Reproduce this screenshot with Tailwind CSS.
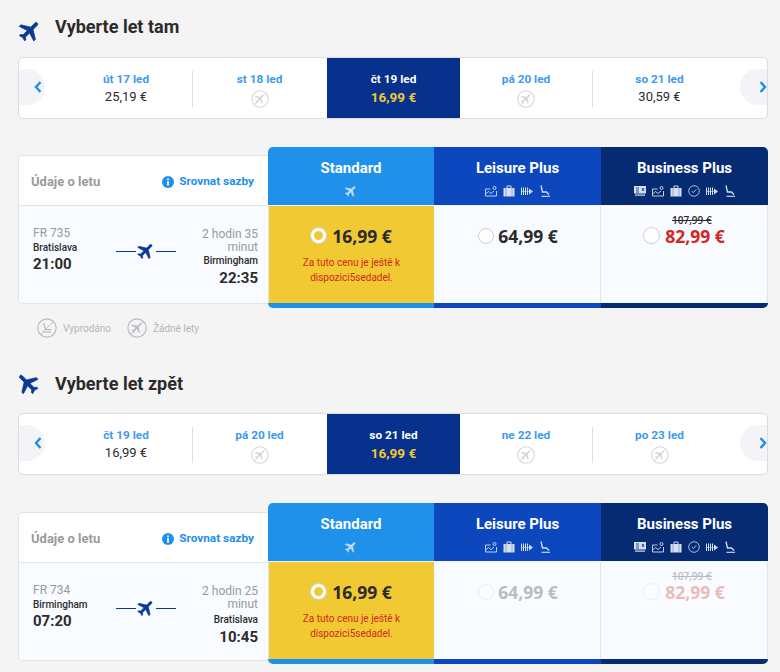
<!DOCTYPE html>
<html lang="cs">
<head>
<meta charset="UTF-8">
<title>Vyberte let</title>
<script src="https://cdn.jsdelivr.net/npm/@tailwindcss/browser@4"></script>
</head>
<body class="bg-[#f4f4f4] font-['Roboto',sans-serif] text-[#2b2b2b] h-[672px] overflow-hidden">
<svg class="hidden">
  <symbol id="plane" viewBox="0 0 24 24"><path fill="currentColor" stroke="currentColor" stroke-width=".7" d="M21 16v-2l-8-5V3.500c0-.83-.67-1.500-1.500-1.500S10 2.670 10 3.500V9l-8 5v2l8-2.500V19l-2 1.500V22l3.500-1 3.500 1v-1.500L13 19v-5.500l8 2.500z"/></symbol>
  <symbol id="noflight" viewBox="0 0 24 24">
    <circle cx="12" cy="12" r="11" fill="none" stroke="currentColor" stroke-width="1.400"/>
    <path fill="currentColor" transform="rotate(45 12 12) translate(3.500 3.500) scale(.7)" d="M21 16v-2l-8-5V3.500c0-.83-.67-1.500-1.500-1.500S10 2.670 10 3.500V9l-8 5v2l8-2.500V19l-2 1.500V22l3.500-1 3.500 1v-1.500L13 19v-5.500l8 2.500z"/>
    <path d="M19.500 4.500 4.500 19.500" stroke="currentColor" stroke-width="1.200"/>
  </symbol>
  <symbol id="soldout" viewBox="0 0 24 24">
    <circle cx="12" cy="12" r="11" fill="none" stroke="currentColor" stroke-width="1.400"/>
    <path d="M8 6l2 8h7M8 17h9" fill="none" stroke="currentColor" stroke-width="1.500"/>
    <path d="M19.500 4.500 4.500 19.500" stroke="currentColor" stroke-width="1.200"/>
  </symbol>
  <symbol id="ticket" viewBox="0 0 12 12"><path fill="currentColor" d="M0 1h12v7.500H0z"/><path d="M2 3h3M2 5h3M2 7h3M8 3l2 3M10 3L8 6" stroke="#0a2a70" stroke-width=".8"/><path fill="currentColor" d="M1 9.500h10v1.200H1z"/></symbol>
  <symbol id="map" viewBox="0 0 12 12"><path d="M.5 4h5M.5 4v7h11V6M.5 9l3-2.500 2.500 2 3-2.500" fill="none" stroke="currentColor" stroke-width=".9"/><circle cx="9.500" cy="3" r="1.500" fill="none" stroke="currentColor" stroke-width=".9"/></symbol>
  <symbol id="bag" viewBox="0 0 12 12"><path fill="currentColor" d="M.5 3h11v8.500H.5z"/><path d="M4 3V1h4v2" fill="none" stroke="currentColor"/><path d="M3 3v8.500M9 3v8.500" stroke="#000" stroke-opacity=".35" stroke-width=".7"/></symbol>
  <symbol id="clock" viewBox="0 0 12 12"><circle cx="6" cy="6" r="5.300" fill="none" stroke="currentColor" stroke-width=".8"/><path d="M3.800 6.200 5.400 7.600 8.200 4.400" fill="none" stroke="currentColor" stroke-width=".8"/></symbol>
  <symbol id="rows" viewBox="0 0 12 12"><path d="M.5 2.500v7.500M2.500 2.500v7.500M4.500 2.500v7.500M6.500 2.500v7.500" stroke="currentColor" stroke-width="1"/><path d="M0 6.500h8" stroke="currentColor" stroke-width=".6"/><path fill="currentColor" d="M8 3.500 12 6.500 8 9.500z"/></symbol>
  <symbol id="seat" viewBox="0 0 12 12"><path d="M2 .5l1.500 6.500h4l2.500 2.500" fill="none" stroke="currentColor" stroke-width="1.300"/><path d="M2.500 11.300h8.500" stroke="currentColor" stroke-width="1.100"/></symbol>
  <symbol id="info" viewBox="0 0 12 12"><circle cx="6" cy="6" r="6" fill="currentColor"/><path d="M5.100 2.400h1.800v1.500H5.100zM5.100 5h1.800v4.600H5.100z" fill="#fff"/></symbol>
</svg>

<main class="w-[768px] pl-[18px]">
  <!-- tam -->
  <section class="h-[57px] flex items-center pt-1">
    <svg class="w-[26px] h-[26px] -ml-[1px] text-[#0b3a96] rotate-45 shrink-0"><use href="#plane"/></svg>
    <h2 class="ml-[12px] text-[18px] font-bold leading-none -mt-2">Vyberte let tam</h2>
  </section>
  <div class="relative h-[62px] bg-white border border-[#dcdcdc] rounded-[5px] overflow-hidden flex pl-[41px] pr-[41px]">
    <button class="absolute left-0 top-[11px] w-[26px] h-9 bg-[#f3f4f8] rounded-r-[18px] flex items-center justify-end pr-[3px]">
      <svg class="w-2 h-3 text-[#2091eb]" viewBox="0 0 8 12"><path d="M6.500 1 2 6l4.500 5" fill="none" stroke="currentColor" stroke-width="2.400"/></svg>
    </button>
    <div class="w-[132px] flex flex-col items-center pt-[13px]">
      <span class="text-[11.8px] font-bold leading-[16px] text-[#3d9af0]">út 17 led</span>
      <span class="text-[13px] leading-[18px] mt-[1px]">25,19 €</span>
    </div>
    <div class="w-px h-[36px] mt-[13px] bg-[#dfdfdf]"></div>
    <div class="w-[133px] flex flex-col items-center pt-[13px]">
      <span class="text-[11.8px] font-bold leading-[16px] text-[#3d9af0]">st 18 led</span>
      <svg class="w-[18px] h-[18px] mt-[3px] text-[#d5d5d5]"><use href="#noflight"/></svg>
    </div>
    <div class="w-[133px] ml-[1px] bg-[#07318c] flex flex-col items-center pt-[13px]">
      <span class="text-[11.8px] font-bold leading-[16px] text-white">čt 19 led</span>
      <span class="text-[13.5px] font-bold leading-[18px] mt-[1px] text-[#f1c933]">16,99 €</span>
    </div>
    <div class="w-[132px] flex flex-col items-center pt-[13px]">
      <span class="text-[11.8px] font-bold leading-[16px] text-[#3d9af0]">pá 20 led</span>
      <svg class="w-[18px] h-[18px] mt-[3px] text-[#d5d5d5]"><use href="#noflight"/></svg>
    </div>
    <div class="w-px h-[36px] mt-[13px] bg-[#dfdfdf]"></div>
    <div class="w-[133px] flex flex-col items-center pt-[13px]">
      <span class="text-[11.8px] font-bold leading-[16px] text-[#3d9af0]">so 21 led</span>
      <span class="text-[13px] leading-[18px] mt-[1px]">30,59 €</span>
    </div>
    <button class="absolute right-0 top-[11px] w-[27px] h-9 bg-[#f3f4f8] rounded-l-[18px] flex items-center justify-end">
      <svg class="w-2 h-3 text-[#2091eb]" viewBox="0 0 8 12"><path d="M1.500 1 6 6l-4.500 5" fill="none" stroke="currentColor" stroke-width="2.400"/></svg>
    </button>
  </div>

  <div class="flex mt-7 h-[161px]">
    <div class="w-[250px] mt-2 h-[149px] border border-r-0 border-[#e3e3e3] rounded-l-[5px] overflow-hidden">
      <div class="h-[50px] bg-white border-b border-[#e0e4ea] flex items-center justify-between pl-[12px] pr-[14px] pt-[2px]">
        <span class="text-[13px] font-bold text-[#9a9a9a]">Údaje o letu</span>
        <span class="flex items-center gap-[5px] text-[11.8px] font-bold text-[#2091eb]"><svg class="w-3 h-3"><use href="#info"/></svg>Srovnat sazby</span>
      </div>
      <div class="h-[97px] bg-[#f8fbff] flex pl-[14px] pr-[10px] pt-[20px]">
        <div class="w-[72px]">
          <div class="text-[12px] leading-[15px] text-[#9a9a9a]">FR 735</div>
          <div class="text-[10px] leading-[12px] font-medium mt-[1px]">Bratislava</div>
          <div class="text-[15px] font-bold leading-[18px] mt-[1px]">21:00</div>
        </div>
        <div class="w-[60px] ml-[11px] mt-[15px] h-[20px] flex items-center text-[#0b3a96]">
          <span class="h-px w-5 bg-[#0b3a96]"></span>
          <svg class="w-[20px] h-[20px] rotate-45 shrink-0"><use href="#plane"/></svg>
          <span class="h-px w-5 bg-[#0b3a96]"></span>
        </div>
        <div class="flex-1 text-right mt-[2px]">
          <div class="text-[12px] leading-[13px] text-[#9a9a9a]">2 hodin 35 minut</div>
          <div class="text-[10px] leading-[12px] font-medium mt-[1px]">Birmingham</div>
          <div class="text-[15px] font-bold leading-[18px] mt-[2px]">22:35</div>
        </div>
      </div>
    </div>
    <div class="w-[166px] flex flex-col">
      <div class="h-[58px] bg-[#2091eb] rounded-tl-[5px] flex flex-col items-center text-white pt-[13px]">
        <span class="text-[15px] font-bold leading-[16px]">Standard</span>
        <svg class="w-[14px] h-[14px] mt-[8px] rotate-45 text-[#c5def8]"><use href="#plane"/></svg>
      </div>
      <div class="h-[98px] mt-px bg-[#f1c933] border-l border-[#e0e4ea] flex flex-col items-center pt-5">
        <div class="flex items-center gap-[6px]">
          <span class="w-[15px] h-[15px] rounded-full border-[3px] border-white ring-1 ring-[#d5d5d5]"></span>
          <span class="font-['Open_Sans',sans-serif] text-[17.5px] font-bold leading-[20px]">16,99 €</span>
        </div>
        <p class="mt-[9px] w-[120px] text-center text-[10px] leading-[15px] text-[#d3281c]">Za tuto cenu je ještě k dispozici5sedadel.</p>
      </div>
      <div class="h-[5px] bg-[#2091eb] rounded-bl-[5px]"></div>
    </div>
    <div class="w-[167px] flex flex-col">
      <div class="h-[58px] bg-[#0c47bd] flex flex-col items-center text-white pt-[13px]">
        <span class="text-[15px] font-bold leading-[16px]">Leisure Plus</span>
        <div class="flex gap-[6px] mt-[9px] text-[#d3dff5]">
          <svg class="w-3 h-3"><use href="#map"/></svg><svg class="w-3 h-3"><use href="#bag"/></svg><svg class="w-3 h-3"><use href="#rows"/></svg><svg class="w-3 h-3"><use href="#seat"/></svg>
        </div>
      </div>
      <div class="h-[98px] mt-px bg-[#f8fbff] border-r border-[#e0e4ea] flex flex-col items-center pt-5">
        <div class="flex items-center gap-[4px] ml-[2px]">
          <span class="w-4 h-4 rounded-full bg-white border border-[#cfcfcf]"></span>
          <span class="font-['Open_Sans',sans-serif] text-[17.5px] font-bold leading-[20px]">64,99 €</span>
        </div>
      </div>
      <div class="h-[5px] bg-[#0c47bd]"></div>
    </div>
    <div class="w-[167px] flex flex-col">
      <div class="h-[58px] bg-[#062b73] rounded-tr-[5px] flex flex-col items-center text-white pt-[13px]">
        <span class="text-[15px] font-bold leading-[16px]">Business Plus</span>
        <div class="flex gap-[6px] mt-[9px] text-[#d3dff5]">
          <svg class="w-3 h-3"><use href="#ticket"/></svg><svg class="w-3 h-3"><use href="#map"/></svg><svg class="w-3 h-3"><use href="#bag"/></svg><svg class="w-3 h-3"><use href="#clock"/></svg><svg class="w-3 h-3"><use href="#rows"/></svg><svg class="w-3 h-3"><use href="#seat"/></svg>
        </div>
      </div>
      <div class="relative h-[98px] mt-px bg-[#f8fbff] border-r border-[#e0e4ea] flex flex-col items-center pt-5">
        <span class="absolute top-[8px] left-[71px] font-['Open_Sans',sans-serif] text-[10px] font-semibold line-through leading-[12px]">107,99 €</span>
        <div class="flex items-center gap-[5px]">
          <span class="w-[17px] h-[17px] rounded-full bg-white border border-[#cfcfcf]"></span>
          <span class="font-['Open_Sans',sans-serif] text-[17.5px] font-bold leading-[20px] text-[#d3281c]">82,99 €</span>
        </div>
      </div>
      <div class="h-[5px] bg-[#062b73] rounded-br-[5px]"></div>
    </div>
  </div>

  <div class="flex items-center h-[20px] mt-[10px] pl-[19px] text-[10px] text-[#b5b5b5]">
    <svg class="w-[20px] h-[20px] text-[#b9bdc4]"><use href="#soldout"/></svg>
    <span class="ml-[6px]">Vyprodáno</span>
    <svg class="w-[20px] h-[20px] ml-[16px] text-[#b9bdc4]"><use href="#noflight"/></svg>
    <span class="ml-[6px]">Žádné lety</span>
  </div>

  <!-- zpět -->
  <section class="h-[48px] mt-[10px] flex items-end">
    <svg class="w-[26px] h-[26px] -rotate-45 text-[#0b3a96] shrink-0 -ml-[3px]"><use href="#plane"/></svg>
    <h2 class="ml-[14px] text-[18px] font-bold leading-[24px]">Vyberte let zpět</h2>
  </section>
  <div class="relative mt-[17px] h-[62px] bg-white border border-[#dcdcdc] rounded-[5px] overflow-hidden flex pl-[41px] pr-[41px]">
    <button class="absolute left-0 top-[11px] w-[26px] h-9 bg-[#f3f4f8] rounded-r-[18px] flex items-center justify-end pr-[3px]">
      <svg class="w-2 h-3 text-[#2091eb]" viewBox="0 0 8 12"><path d="M6.500 1 2 6l4.500 5" fill="none" stroke="currentColor" stroke-width="2.400"/></svg>
    </button>
    <div class="w-[132px] flex flex-col items-center pt-[13px]">
      <span class="text-[11.8px] font-bold leading-[16px] text-[#3d9af0]">čt 19 led</span>
      <span class="text-[13px] leading-[18px] mt-[1px]">16,99 €</span>
    </div>
    <div class="w-px h-[36px] mt-[13px] bg-[#dfdfdf]"></div>
    <div class="w-[133px] flex flex-col items-center pt-[13px]">
      <span class="text-[11.8px] font-bold leading-[16px] text-[#3d9af0]">pá 20 led</span>
      <svg class="w-[18px] h-[18px] mt-[3px] text-[#d5d5d5]"><use href="#noflight"/></svg>
    </div>
    <div class="w-[133px] ml-[1px] bg-[#07318c] flex flex-col items-center pt-[13px]">
      <span class="text-[11.8px] font-bold leading-[16px] text-white">so 21 led</span>
      <span class="text-[13.5px] font-bold leading-[18px] mt-[1px] text-[#f1c933]">16,99 €</span>
    </div>
    <div class="w-[132px] flex flex-col items-center pt-[13px]">
      <span class="text-[11.8px] font-bold leading-[16px] text-[#3d9af0]">ne 22 led</span>
      <svg class="w-[18px] h-[18px] mt-[3px] text-[#d5d5d5]"><use href="#noflight"/></svg>
    </div>
    <div class="w-px h-[36px] mt-[13px] bg-[#dfdfdf]"></div>
    <div class="w-[133px] flex flex-col items-center pt-[13px]">
      <span class="text-[11.8px] font-bold leading-[16px] text-[#3d9af0]">po 23 led</span>
      <svg class="w-[18px] h-[18px] mt-[3px] text-[#d5d5d5]"><use href="#noflight"/></svg>
    </div>
    <button class="absolute right-0 top-[11px] w-[27px] h-9 bg-[#f3f4f8] rounded-l-[18px] flex items-center justify-end">
      <svg class="w-2 h-3 text-[#2091eb]" viewBox="0 0 8 12"><path d="M1.500 1 6 6l-4.500 5" fill="none" stroke="currentColor" stroke-width="2.400"/></svg>
    </button>
  </div>

  <div class="flex mt-7 h-[161px]">
    <div class="w-[250px] mt-[9px] h-[149px] border border-r-0 border-[#e3e3e3] rounded-l-[5px] overflow-hidden">
      <div class="h-[50px] bg-white border-b border-[#e0e4ea] flex items-center justify-between pl-[12px] pr-[14px] pt-[2px]">
        <span class="text-[13px] font-bold text-[#9a9a9a]">Údaje o letu</span>
        <span class="flex items-center gap-[5px] text-[11.8px] font-bold text-[#2091eb]"><svg class="w-3 h-3"><use href="#info"/></svg>Srovnat sazby</span>
      </div>
      <div class="h-[97px] bg-[#f8fbff] flex pl-[14px] pr-[10px] pt-[20px]">
        <div class="w-[72px]">
          <div class="text-[12px] leading-[15px] text-[#9a9a9a]">FR 734</div>
          <div class="text-[10px] leading-[12px] font-medium mt-[1px]">Birmingham</div>
          <div class="text-[15px] font-bold leading-[18px] mt-[1px]">07:20</div>
        </div>
        <div class="w-[60px] ml-[11px] mt-[15px] h-[20px] flex items-center text-[#0b3a96]">
          <span class="h-px w-5 bg-[#0b3a96]"></span>
          <svg class="w-[20px] h-[20px] rotate-45 shrink-0"><use href="#plane"/></svg>
          <span class="h-px w-5 bg-[#0b3a96]"></span>
        </div>
        <div class="flex-1 text-right mt-[2px]">
          <div class="text-[12px] leading-[13px] text-[#9a9a9a]">2 hodin 25 minut</div>
          <div class="text-[10px] leading-[12px] font-medium mt-[3px]">Bratislava</div>
          <div class="text-[15px] font-bold leading-[18px] mt-[2px]">10:45</div>
        </div>
      </div>
    </div>
    <div class="w-[166px] flex flex-col">
      <div class="h-[58px] bg-[#2091eb] rounded-tl-[5px] flex flex-col items-center text-white pt-[13px]">
        <span class="text-[15px] font-bold leading-[16px]">Standard</span>
        <svg class="w-[14px] h-[14px] mt-[8px] rotate-45 text-[#c5def8]"><use href="#plane"/></svg>
      </div>
      <div class="h-[98px] mt-px bg-[#f1c933] border-l border-[#e0e4ea] flex flex-col items-center pt-5">
        <div class="flex items-center gap-[6px]">
          <span class="w-[15px] h-[15px] rounded-full border-[3px] border-white ring-1 ring-[#d5d5d5]"></span>
          <span class="font-['Open_Sans',sans-serif] text-[17.5px] font-bold leading-[20px]">16,99 €</span>
        </div>
        <p class="mt-[9px] w-[120px] text-center text-[10px] leading-[15px] text-[#d3281c]">Za tuto cenu je ještě k dispozici5sedadel.</p>
      </div>
      <div class="h-[5px] bg-[#2091eb] rounded-bl-[5px]"></div>
    </div>
    <div class="w-[167px] flex flex-col">
      <div class="h-[58px] bg-[#0c47bd] flex flex-col items-center text-white pt-[13px]">
        <span class="text-[15px] font-bold leading-[16px]">Leisure Plus</span>
        <div class="flex gap-[6px] mt-[9px] text-[#d3dff5]">
          <svg class="w-3 h-3"><use href="#map"/></svg><svg class="w-3 h-3"><use href="#bag"/></svg><svg class="w-3 h-3"><use href="#rows"/></svg><svg class="w-3 h-3"><use href="#seat"/></svg>
        </div>
      </div>
      <div class="h-[98px] mt-px bg-[#f8fbff] border-r border-[#e0e4ea] flex flex-col items-center pt-5">
        <div class="flex items-center gap-[4px] ml-[2px] opacity-30">
          <span class="w-4 h-4 rounded-full bg-white border border-[#cfcfcf]"></span>
          <span class="font-['Open_Sans',sans-serif] text-[17.5px] font-bold leading-[20px]">64,99 €</span>
        </div>
      </div>
      <div class="h-[5px] bg-[#0c47bd]"></div>
    </div>
    <div class="w-[167px] flex flex-col">
      <div class="h-[58px] bg-[#062b73] rounded-tr-[5px] flex flex-col items-center text-white pt-[13px]">
        <span class="text-[15px] font-bold leading-[16px]">Business Plus</span>
        <div class="flex gap-[6px] mt-[9px] text-[#d3dff5]">
          <svg class="w-3 h-3"><use href="#ticket"/></svg><svg class="w-3 h-3"><use href="#map"/></svg><svg class="w-3 h-3"><use href="#bag"/></svg><svg class="w-3 h-3"><use href="#clock"/></svg><svg class="w-3 h-3"><use href="#rows"/></svg><svg class="w-3 h-3"><use href="#seat"/></svg>
        </div>
      </div>
      <div class="relative h-[98px] mt-px bg-[#f8fbff] border-r border-[#e0e4ea] flex flex-col items-center pt-5">
        <span class="absolute top-[8px] left-[71px] font-['Open_Sans',sans-serif] text-[10px] font-semibold line-through leading-[12px] opacity-30">107,99 €</span>
        <div class="flex items-center gap-[5px] opacity-30">
          <span class="w-[17px] h-[17px] rounded-full bg-white border border-[#cfcfcf]"></span>
          <span class="font-['Open_Sans',sans-serif] text-[17.5px] font-bold leading-[20px] text-[#d3281c]">82,99 €</span>
        </div>
      </div>
      <div class="h-[5px] bg-[#062b73] rounded-br-[5px]"></div>
    </div>
  </div>
</main>
</body>
</html>
